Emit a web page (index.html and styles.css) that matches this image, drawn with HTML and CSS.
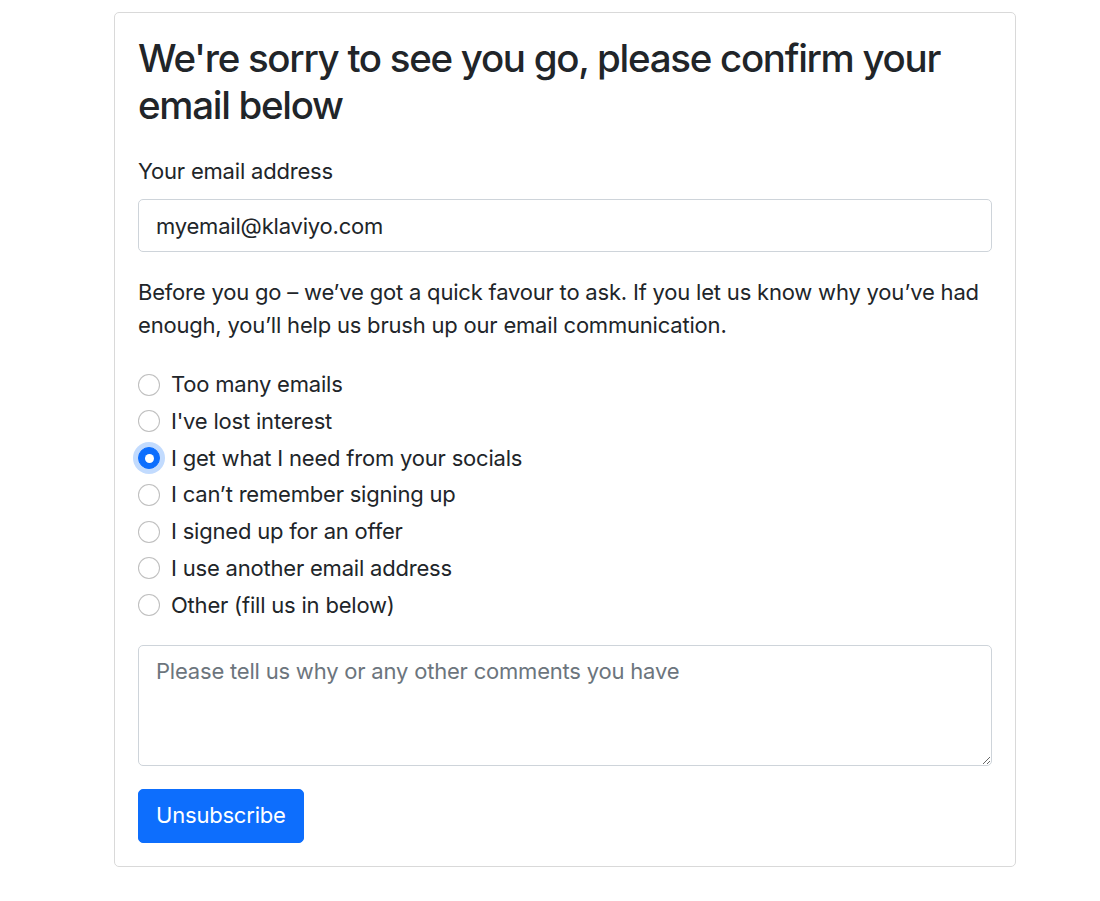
FILE: index.html
```html
<!DOCTYPE html>
<html lang="en">
<head>
<meta charset="utf-8">
<title>Unsubscribe</title>
<link rel="stylesheet" href="styles.css">
</head>
<body>
<main class="page">
  <form class="card">
    <h3 class="title">We're sorry to see you go, please confirm your email below</h3>
    <label class="label" for="email">Your email address</label>
    <input class="control" id="email" type="email" value="myemail@klaviyo.com">
    <p class="intro">Before you go – we’ve got a quick favour to ask. If you let us know why you’ve had enough, you’ll help us brush up our email communication.</p>
    <div class="choices">
      <label class="check"><span class="radio"></span><span>Too many emails</span></label>
      <label class="check"><span class="radio"></span><span>I've lost interest</span></label>
      <label class="check"><span class="radio checked"></span><span>I get what I need from your socials</span></label>
      <label class="check"><span class="radio"></span><span>I can’t remember signing up</span></label>
      <label class="check"><span class="radio"></span><span>I signed up for an offer</span></label>
      <label class="check"><span class="radio"></span><span>I use another email address</span></label>
      <label class="check"><span class="radio"></span><span>Other (fill us in below)</span></label>
    </div>
    <textarea class="control comments" placeholder="Please tell us why or any other comments you have"></textarea>
    <div class="actions"><button class="btn" type="button">Unsubscribe</button></div>
  </form>
</main>
</body>
</html>
```
FILE: styles.css
```css
* { box-sizing: border-box; }
html, body { margin: 0; padding: 0; background: #fff; }
body {
  font-family: Inter, "Noto Sans", "Liberation Sans", sans-serif;
  font-size: 22px;
  line-height: 33px;
  color: #212529;
  letter-spacing: -0.2px;
}
.page { padding: 12px 0 0 114px; }
.card {
  width: 902px;
  border: 1px solid #d9d9d9;
  border-radius: 5px;
  padding: 22px 23px 23px 23px;
  display: flex;
  flex-direction: column;
}
.title {
  margin: 0 0 26px 0;
  font-size: 38.5px;
  line-height: 47px;
  font-weight: 500;
  letter-spacing: -1.3px;
}
.label { display: block; margin: 0 0 11px 0; }
.control {
  display: block;
  width: 100%;
  font: inherit;
  letter-spacing: inherit;
  color: #212529;
  border: 1px solid #ced4da;
  border-radius: 5px;
  padding: 9px 17px;
  background: #fff;
  outline: none;
}
#email { height: 53px; }
.intro { margin: 24px 0 26px 0; }
.choices { display: flex; flex-direction: column; gap: 3.8px; }
.check {
  display: flex;
  align-items: center;
  gap: 11px;
  height: 33px;
}
.radio {
  width: 22px;
  height: 22px;
  border-radius: 50%;
  border: 1px solid rgba(0,0,0,0.25);
  background: #fff;
  flex: none;
}
.radio.checked {
  background: #0d6efd;
  border-color: #0d6efd;
  box-shadow: 0 0 0 5px rgba(13,110,253,0.25);
  position: relative;
}
.radio.checked::after {
  content: "";
  position: absolute;
  left: 50%; top: 50%;
  width: 9px; height: 9px;
  margin: -4.5px 0 0 -4.5px;
  border-radius: 50%;
  background: #fff;
}
.comments {
  margin-top: 23px;
  height: 121px;
  resize: vertical;
}
.comments::placeholder { color: #6c757d; opacity: 1; }
.actions { margin-top: 23px; }
.btn {
  font: inherit;
  letter-spacing: inherit;
  color: #fff;
  background: #0d6efd;
  border: 1px solid #0d6efd;
  border-radius: 5px;
  height: 54px;
  padding: 0 17px;
}
```
